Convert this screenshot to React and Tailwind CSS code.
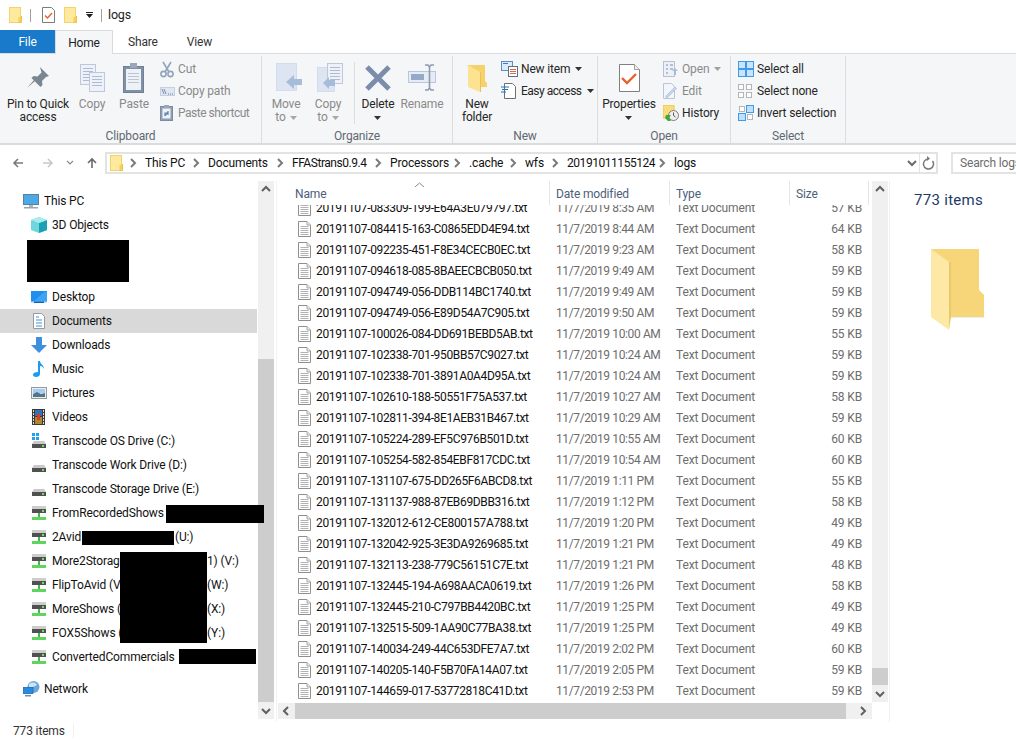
import React from "react";

const rows = [
  ["083309-199-E64A3E079797", "8:35 AM", 57], ["084415-163-C0865EDD4E94", "8:44 AM", 64],
  ["092235-451-F8E34CECB0EC", "9:23 AM", 58], ["094618-085-8BAEECBCB050", "9:49 AM", 59],
  ["094749-056-DDB114BC1740", "9:49 AM", 59], ["094749-056-E89D54A7C905", "9:50 AM", 59],
  ["100026-084-DD691BEBD5AB", "10:00 AM", 55], ["102338-701-950BB57C9027", "10:24 AM", 59],
  ["102338-701-3891A0A4D95A", "10:24 AM", 59], ["102610-188-50551F75A537", "10:27 AM", 58],
  ["102811-394-8E1AEB31B467", "10:29 AM", 59], ["105224-289-EF5C976B501D", "10:55 AM", 60],
  ["105254-582-854EBF817CDC", "10:54 AM", 60], ["131107-675-DD265F6ABCD8", "1:11 PM", 55],
  ["131137-988-87EB69DBB316", "1:12 PM", 58], ["132012-612-CE800157A788", "1:20 PM", 49],
  ["132042-925-3E3DA9269685", "1:21 PM", 49], ["132113-238-779C56151C7E", "1:21 PM", 48],
  ["132445-194-A698AACA0619", "1:26 PM", 58], ["132445-210-C797BB4420BC", "1:25 PM", 49],
  ["132515-509-1AA90C77BA38", "1:25 PM", 49], ["140034-249-44C653DFE7A7", "2:02 PM", 60],
  ["140205-140-F5B70FA14A07", "2:05 PM", 59], ["144659-017-53772818C41D", "2:53 PM", 59],
];

const S = ({ w, h, children, className = "" }) => (
  <svg width={w} height={h} viewBox={`0 0 ${w} ${h}`} className={`block shrink-0 ${className}`}>{children}</svg>
);

const FolderTiny = () => (
  <S w={13} h={16}>
    <rect x="0.5" y="0.5" width="11" height="15" fill="#ffe99e" stroke="#f4d36a" />
    <path d="M12.5 9v6.5H9.5" fill="none" stroke="#e8b93e" strokeWidth="1" />
    <rect x="9.5" y="10" width="3" height="5.5" fill="#f7cf5a" />
  </S>
);
const PropsTiny = () => (
  <S w={13} h={16}>
    <path d="M.5.5h9l3 3v12H.5z" fill="#fff" stroke="#7c7c7c" />
    <path d="M3 8.5l2.5 2.5L10 6" fill="none" stroke="#e8602a" strokeWidth="1.4" />
  </S>
);
const FileIcon = () => (
  <S w={13} h={16}>
    <path d="M.5.5h8.5l3.5 3.5v11.5H.5z" fill="#fff" stroke="#8f8f8f" />
    <path d="M9 .5v3.5h3.5" fill="#eee" stroke="#a5a5a5" />
    {[5, 7, 9, 11, 13].map((y) => <rect key={y} x="2.5" y={y} width="8" height="1" fill="#b2b2b2" />)}
  </S>
);
const Chev = ({ dir = "up", color = "#606060" }) => {
  const p = { up: "M1 6l4-4 4 4", down: "M1 2l4 4 4-4", left: "M6 1L2 5l4 4", right: "M3 1l4 4-4 4" }[dir];
  return <S w={10} h={10}><path d={p} transform={dir === "up" || dir === "down" ? "translate(0 1)" : ""} fill="none" stroke={color} strokeWidth="2" /></S>;
};
const Caret = ({ color = "#333" }) => <S w={7} h={4}><path d="M0 0h7L3.5 4z" fill={color} /></S>;

/* ribbon icons */
const Pin = () => (
  <S w={24} h={24}>
    <path d="M14 1l9 9-3 1-4 4 .5 4-2 2-9-9 2-2 4 .5 4-4z" fill="#7b8693" />
    <path d="M8 14l-7 8 8-7z" fill="#7b8693" />
  </S>
);
const DocBlue = ({ x, y, w, h }) => (
  <g>
    <rect x={x + .5} y={y + .5} width={w} height={h} fill="#eef1f7" stroke="#bcc8dd" />
    {Array.from({ length: Math.floor((h - 5) / 3) }).map((_, i) => <rect key={i} x={x + 3} y={y + 4 + i * 3} width={w - 5} height="1" fill="#aebbd0" />)}
  </g>
);
const CopyBig = () => <S w={26} h={30}><DocBlue x={1} y={1} w={15} h={20} /><DocBlue x={10} y={9} w={15} h={19} /></S>;
const PasteBig = () => (
  <S w={22} h={30}>
    <rect x=".5" y="3.5" width="20" height="26" fill="#8090a5" stroke="#6f8196" />
    <rect x="3" y="6" width="15" height="21" fill="#eef1f5" />
    {[10, 13, 16, 19].map((y) => <rect key={y} x="5" y={y} width="11" height="1" fill="#b9c5d6" />)}
    <rect x="7" y="0" width="7" height="5" fill="#9aa7b8" />
  </S>
);
const Scissors = () => (
  <S w={14} h={17}>
    <path d="M3 1l6 10M11 1L5 11" stroke="#93a5bd" strokeWidth="1.6" fill="none" />
    <circle cx="3.5" cy="13" r="2.6" fill="none" stroke="#93a5bd" strokeWidth="1.6" />
    <circle cx="10.5" cy="13" r="2.6" fill="none" stroke="#93a5bd" strokeWidth="1.6" />
  </S>
);
const CopyPathI = () => (
  <S w={15} h={9}>
    <rect x=".5" y=".5" width="14" height="8" fill="#dfe7f3" stroke="#c4d0e2" />
    <path d="M2 2l2 5M4 2l2 5" stroke="#667892" strokeWidth=".8" />
    <path d="M8 7h1M10 7h1M12 7h1" stroke="#667892" />
  </S>
);
const PasteShort = () => (
  <S w={13} h={16}>
    <rect x=".5" y="1.5" width="12" height="14" fill="#8f9fb4" stroke="#7c8da3" />
    <rect x="2.5" y="3.5" width="8" height="10" fill="#eef1f5" />
    <path d="M5 11V8h3M8 6v4M8 7L5 11" stroke="#5e83ad" strokeWidth="1.2" fill="none" />
    <rect x="4" y="0" width="5" height="3" fill="#9aa7b8" />
  </S>
);
const Arrow = () => <path d="M0 9l8-7v4h8v6H8v4z" fill="#a7bcd9" />;
const MoveTo = () => (
  <S w={27} h={29} className="ml-[6px]">
    <rect x=".5" y=".5" width="20" height="27" fill="#dde5f2" stroke="#d2dcec" />
    <g transform="translate(10 10)"><Arrow /></g>
  </S>
);
const CopyTo = () => (
  <S w={27} h={30} className="ml-[5px]">
    <rect x=".5" y="4.5" width="17" height="24" fill="#dde5f2" stroke="#d2dcec" />
    <DocBlue x={10} y={0} w={15} h={20} />
    <g transform="translate(6 13)"><path d="M0 7l6-6v3h6v6H6v3z" fill="#a7bcd9" /></g>
  </S>
);
const DeleteI = () => (
  <S w={26} h={26}>
    <path d="M2 2l22 22M24 2L2 24" stroke="#7c8dab" strokeWidth="5" />
  </S>
);
const RenameI = () => (
  <S w={29} h={27}>
    <rect x=".5" y="7.5" width="27" height="11" fill="#e6ecf5" stroke="#b9c6db" />
    <rect x="3" y="10" width="13" height="6" fill="#96a9c6" />
    <path d="M17 1h3l1.5 2L23 1h3M21.5 3v21M17 26h3l1.5-2 1.5 2h3" stroke="#8c9ab2" strokeWidth="1.6" fill="none" />
  </S>
);
const NewFolderBig = () => (
  <S w={20} h={28}>
    <path d="M0 1l12 0h6v16l2 2v4H14v-3z" fill="#f6d26b" />
    <path d="M1 1l12 7v20L1 23z" fill="#fbe391" />
    <path d="M13 8h1v20h-1z" fill="#e9c25a" />
  </S>
);
const NewItem = () => (
  <S w={17} h={16}>
    <rect x=".5" y=".5" width="11" height="9" fill="#dcebf9" stroke="#5b8fc0" />
    <rect x="2" y="2" width="5" height="1" fill="#3f7cb8" />
    <rect x="7.5" y="5.5" width="9" height="10" fill="#fff" stroke="#5f6f84" />
    {[8, 10, 12].map((y) => <rect key={y} x="9" y={y} width="6" height="1" fill="#d66b4c" />)}
  </S>
);
const EasyAccess = () => (
  <S w={15} h={16}>
    <path d="M3.5.5h8l3 3v12h-11z" fill="#fff" stroke="#6f6f6f" />
    <path d="M0 4h8M1 6.5h6M0 9h5" stroke="#1f73c4" strokeWidth="1.2" />
  </S>
);
const PropsBig = () => (
  <S w={21} h={28}>
    <path d="M.5.5h15l5 5v22H.5z" fill="#fff" stroke="#808080" />
    <path d="M15.5.5v5h5" fill="#eee" stroke="#a0a0a0" />
    <path d="M3 14l5 5 9-9" fill="none" stroke="#e8602a" strokeWidth="2.4" />
  </S>
);
const OpenI = () => (
  <S w={16} h={16}>
    <rect x=".5" y=".5" width="11" height="15" fill="#edf1f7" stroke="#b5c2d6" />
    <path d="M3 4h2M7 4h3M3 8h2M7 8h3M3 12h2" stroke="#9fb0c8" strokeWidth="1.6" />
    <path d="M9 10l3-3 3 3h-2v4h-2v-4z" fill="#a8bcd8" />
  </S>
);
const EditI = () => (
  <S w={14} h={16}>
    <path d="M.5.5h8l3 3v12h-11z" fill="#f2f5fa" stroke="#b9c6da" />
    <path d="M3 13l9-9 1.5 1.5-9 9H3z" fill="#c7d6ea" stroke="#9fb3cf" strokeWidth=".6" />
  </S>
);
const HistoryI = () => (
  <S w={16} h={16}>
    <rect x="0" y="0" width="11" height="13" fill="#f9dd7c" stroke="#e9c44a" />
    <circle cx="10.5" cy="10.5" r="5" fill="#eee" stroke="#7c7c7c" />
    <path d="M10.5 7.5v3l2 1.5" stroke="#555" fill="none" />
    <path d="M3 10h5l-2 3 2 3H5l-3-3z" fill="#3fa838" />
  </S>
);
const Sq = ({ x, y, fill, stroke, s = 7 }) => <rect x={x + .5} y={y + .5} width={s} height={s} fill={fill} stroke={stroke} />;
const SelAll = () => (
  <S w={16} h={16}>
    <rect x=".5" y=".5" width="15" height="15" fill="#cce4fb" stroke="#3c9bec" />
    <path d="M8 0v16M0 8h16" stroke="#3c9bec" strokeWidth="2" />
  </S>
);
const SelNone = () => (
  <S w={15} h={15}>
    <Sq x={0} y={0} s={5} fill="#fff" stroke="#b5b5b5" /><Sq x={8} y={0} s={5} fill="#fff" stroke="#b5b5b5" />
    <Sq x={0} y={8} s={5} fill="#fff" stroke="#b5b5b5" /><Sq x={8} y={8} s={5} fill="#fff" stroke="#b5b5b5" />
  </S>
);
const SelInvert = () => (
  <S w={16} h={16}>
    <Sq x={1} y={1} s={5} fill="#fff" stroke="#b5b5b5" /><Sq x={8} y={0} s={7} fill="#bfdffb" stroke="#3c9bec" />
    <Sq x={0} y={8} s={7} fill="#bfdffb" stroke="#3c9bec" /><Sq x={9} y={9} s={5} fill="#fff" stroke="#b5b5b5" />
  </S>
);

/* nav icons */
const PcI = () => (
  <S w={16} h={15}>
    <rect x=".5" y=".5" width="15" height="10" fill="#4ba9ea" stroke="#5f7f96" />
    <rect x="6" y="11" width="4" height="2" fill="#a9b7c2" />
    <rect x="1" y="13" width="14" height="1.5" fill="#94a6b4" />
  </S>
);
const CubeI = () => (
  <S w={16} h={16}>
    <path d="M8 0l8 3v10l-8 3-8-3V3z" fill="#6fd6de" />
    <path d="M8 6l8-3v10l-8 3z" fill="#1a9fb4" />
    <path d="M8 0l8 3-8 3-8-3z" fill="#a8ecee" />
  </S>
);
const DesktopI = () => (
  <S w={16} h={12}>
    <rect width="16" height="12" fill="#1e8ff0" />
    <path d="M2 11L13 1h3v9z" fill="#3ca3f5" />
    <rect x="0" y="10.5" width="16" height="1.5" fill="#fff" opacity=".75" />
    <rect x="3" y="10.5" width="10" height="1.5" fill="#0b63b5" />
  </S>
);
const DocsI = () => (
  <S w={12} h={16} className="ml-[2px]">
    <path d="M.5.5h8l3 3v12H.5z" fill="#fff" stroke="#9a9a9a" />
    <path d="M3 4h3M3 7h6M3 10h6M3 13h6" stroke="#3f8fd8" strokeWidth="1" />
  </S>
);
const DlI = () => (
  <S w={16} h={16}>
    <path d="M5 0h6v8h5l-8 8-8-8h5z" fill="#3f8fdf" />
  </S>
);
const MusicI = () => (
  <S w={12} h={16} className="ml-[2px]">
    <path d="M5 0h2c0 3 4 4 4 8-1-2-2-3-4-3v8c0 2-2 3-4 3s-3-1-3-2.500S2 11 5 11z" fill="#1e9bf0" />
  </S>
);
const PicI = () => (
  <S w={16} h={12}>
    <rect x=".5" y=".5" width="15" height="11" fill="#e4eef6" stroke="#9a9a9a" />
    <rect x="2" y="2" width="12" height="4" fill="#a8cdee" />
    <path d="M2 7l4-2 4 2 4-1v4H2z" fill="#52758a" />
  </S>
);
const VidI = () => (
  <S w={13} h={16} className="ml-[1px]">
    <rect width="13" height="16" fill="#3a3a3a" />
    {[1, 4, 7, 10, 13].map((y) => <g key={y}><rect x="1" y={y} width="1" height="2" fill="#ddd" /><rect x="11" y={y} width="1" height="2" fill="#ddd" /></g>)}
    <rect x="3" y="1" width="7" height="6" fill="#3b6fb5" />
    <rect x="3" y="8" width="7" height="7" fill="#b0882a" />
    <rect x="5" y="5" width="3" height="6" fill="#d83c2c" />
  </S>
);
const DriveBody = () => (
  <g>
    <path d="M2 4h10l2 3H0z" fill="#c9c9c9" />
    <rect x="0" y="7" width="14" height="4" fill="#505050" />
    <rect x="10" y="8" width="2" height="2" fill="#66e05a" />
  </g>
);
const DriveI = ({ win }) => (
  <S w={15} h={16} className="ml-[1px]">
    <g transform="translate(0 4)"><DriveBody /></g>
    {win && <g fill="#22a0f0"><rect x="0" y="0" width="3" height="3" /><rect x="4" y="0" width="3" height="3" /><rect x="0" y="4" width="3" height="3" /><rect x="4" y="4" width="3" height="3" /></g>}
  </S>
);
const NetDriveI = () => (
  <S w={14} h={15} className="ml-[1px]">
    <rect x="0" y="0" width="14" height="3" fill="#cdcdcd" />
    <rect x="0" y="3" width="14" height="4" fill="#505050" />
    <rect x="10" y="4" width="2" height="2" fill="#66e05a" />
    <rect x="6" y="7" width="2" height="4" fill="#45b94a" />
    <rect x="0" y="11" width="14" height="3" fill="#5fd45f" />
  </S>
);
const NetI = () => (
  <S w={17} h={16}>
    <circle cx="10.500" cy="6" r="6" fill="#6aa8dc" />
    <path d="M6 3c3-2 6-2 8 1-2 1-5 3-8 2z" fill="#cfe4f5" />
    <rect x="0" y="6.500" width="10" height="6" fill="#2a8ae0" stroke="#1b6cb5" strokeWidth=".8" />
    <rect x="2" y="14" width="6" height="1.500" fill="#6f8fa8" />
  </S>
);

const Large = ({ w, icon, lines, disabled, arrow }) => (
  <div className={`${w} flex flex-col items-center pt-[3px]`}>
    <div className="h-[39px] flex items-center justify-center pb-[2px]">{icon}</div>
    <div className={`text-center leading-[13px] whitespace-nowrap ${disabled ? "text-[#8a8a8a]" : "text-[#262626]"}`}>
      {lines.map((l, i) => <div key={i} className="h-[13px] flex items-center justify-center gap-[4px]">{l}</div>)}
      {arrow && <div className="h-[13px] flex items-center justify-center"><Caret /></div>}
    </div>
  </div>
);
const Small = ({ icon, iconW, text, disabled, arrow, tight }) => (
  <div className={`h-[22px] flex items-center whitespace-nowrap ${disabled ? "text-[#8a8a8a]" : "text-[#262626]"}`}>
    <div className={`${iconW} flex items-center`}>{icon}</div>
    <span className={tight ? "tracking-[-0.5px]" : ""}>{text}</span>
    {arrow && <span className="ml-[5px]"><Caret color={disabled ? "#a0a0a0" : "#333"} /></span>}
  </div>
);
const Group = ({ w, label, children }) => (
  <div className={`${w} h-[87px] mt-[2px] border-r border-[#dcdddf] flex flex-col`}>
    <div className="h-[74px] flex">{children}</div>
    <div className="h-[13px] leading-[13px] text-center text-[#5f6873]">{label}</div>
  </div>
);
const Crumb = ({ w, text, tight }) => (
  <div className={`${w} flex items-center shrink-0 whitespace-nowrap`}>
    <span className="w-[12px] mr-[6px] flex justify-center"><Chev dir="right" color="#7a7a7a" /></span>
    <span className={`text-[#111] ${tight ? "tracking-[-0.45px]" : ""}`}>{text}</span>
  </div>
);
const NavRow = ({ icon, children, sel }) => (
  <div className={`h-6 flex items-center pl-[31px] whitespace-nowrap text-[#111] ${sel ? "bg-[#d9d9d9] mr-px" : ""}`}>
    <div className="w-[21px] flex items-center">{icon}</div>
    {children}
  </div>
);
const Black = ({ className }) => <div className={`absolute bg-black z-10 ${className}`} />;

export default function App() {
  return (
    <div className="w-[1016px] h-[740px] overflow-hidden bg-white flex flex-col text-[12px] tracking-[-0.15px] [font-family:Roboto,sans-serif] text-[#222]">
      {/* title */}
      <div className="h-[30px] flex items-center pl-[9px]">
        <FolderTiny />
        <div className="w-px h-[13px] bg-[#a0a0a0] ml-[8px] mr-[11px]" />
        <PropsTiny />
        <div className="ml-[9px]"><FolderTiny /></div>
        <div className="ml-[9px] flex flex-col items-center gap-[1px]"><div className="w-[7px] h-px bg-[#222]" /><Caret color="#222" /></div>
        <div className="w-px h-[13px] bg-[#a0a0a0] ml-[8px] mr-[6px]" />
        <span className="text-[#222] text-[12.5px]">logs</span>
      </div>
      {/* tabs */}
      <div className="h-[24px] flex border-b border-[#dadbdc]">
        <div className="w-[55px] h-[23px] bg-[#1979ca] text-white flex items-center justify-center">File</div>
        <div className="w-[58px] h-[24px] bg-[#f5f6f7] border-x border-t border-[#dadbdc] flex items-center justify-center z-10 text-[#222]">Home</div>
        <div className="ml-[15px] flex items-center text-[#333] h-[23px]">Share</div>
        <div className="ml-[29px] flex items-center text-[#333] h-[23px]">View</div>
      </div>
      {/* ribbon */}
      <div className="h-[91px] bg-[#f5f6f7] border-b-2 border-[#dadbdc] flex">
        <Group w="w-[262px]" label="Clipboard">
          <Large w="w-[76px]" icon={<Pin />} lines={["Pin to Quick", "access"]} />
          <Large w="w-[32px]" icon={<CopyBig />} lines={["Copy"]} disabled />
          <Large w="w-[52px]" icon={<PasteBig />} lines={["Paste"]} disabled />
          <div className="pt-[2px]">
            <Small icon={<Scissors />} iconW="w-[18px]" text="Cut" disabled />
            <Small icon={<CopyPathI />} iconW="w-[18px]" text="Copy path" disabled />
            <Small icon={<PasteShort />} iconW="w-[18px]" text="Paste shortcut" disabled tight />
          </div>
        </Group>
        <Group w="w-[191px]" label="Organize">
          <Large w="w-[48px]" icon={<MoveTo />} lines={["Move", <><span>to</span><Caret color="#a8a8a8" /></>]} disabled />
          <Large w="w-[36px]" icon={<CopyTo />} lines={["Copy", <><span>to</span><Caret color="#a8a8a8" /></>]} disabled />
          <div className="w-[9px] h-[62px] mt-[6px] border-r border-[#dcdddf]" />
          <Large w="w-[46px]" icon={<DeleteI />} lines={["Delete"]} arrow />
          <Large w="w-[42px]" icon={<RenameI />} lines={["Rename"]} disabled />
        </Group>
        <Group w="w-[145px]" label="New">
          <Large w="w-[48px]" icon={<NewFolderBig />} lines={["New", "folder"]} />
          <div className="pt-[2px]">
            <Small icon={<NewItem />} iconW="w-[20px]" text="New item" arrow />
            <Small icon={<EasyAccess />} iconW="w-[20px]" text="Easy access" arrow tight />
          </div>
        </Group>
        <Group w="w-[133px]" label="Open">
          <Large w="w-[62px]" icon={<PropsBig />} lines={["Properties"]} arrow />
          <div className="pt-[2px] pl-[3px]">
            <Small icon={<OpenI />} iconW="w-[19px]" text="Open" disabled arrow />
            <Small icon={<EditI />} iconW="w-[19px]" text="Edit" disabled />
            <Small icon={<HistoryI />} iconW="w-[19px]" text="History" />
          </div>
        </Group>
        <Group w="w-[115px]" label="Select">
          <div className="pt-[2px] pl-[7px]">
            <Small icon={<SelAll />} iconW="w-[19px]" text="Select all" />
            <Small icon={<SelNone />} iconW="w-[19px]" text="Select none" />
            <Small icon={<SelInvert />} iconW="w-[19px]" text="Invert selection" />
          </div>
        </Group>
      </div>
      {/* address */}
      <div className="h-[36px] flex items-center pl-[12px]">
        <svg width="12" height="12" viewBox="0 0 12 12" className="block shrink-0"><path d="M11 6H2M6 2L2 6l4 4" fill="none" stroke="#7a7a7a" strokeWidth="1.6" /></svg>
        <svg width="12" height="12" viewBox="0 0 12 12" className="block shrink-0 ml-[18px]"><path d="M1 6h9M6 2l4 4-4 4" fill="none" stroke="#c8c8c8" strokeWidth="1.6" /></svg>
        <div className="ml-[12px]"><svg width="8" height="6" viewBox="0 0 8 6" className="block"><path d="M1 1l3 3 3-3" fill="none" stroke="#8a8a8a" strokeWidth="1.2" /></svg></div>
        <svg width="12" height="12" viewBox="0 0 12 12" className="block shrink-0 ml-[12px]"><path d="M6 11V2M2 6l4-4 4 4" fill="none" stroke="#6a6a6a" strokeWidth="1.6" /></svg>
        <div className="ml-[7px] w-[833px] h-[22px] border-2 border-[#e3e3e3] flex items-center pl-[3px]">
          <FolderTiny />
          <div className="w-[4px]" />
          <Crumb w="w-[63px]" text="This PC" />
          <Crumb w="w-[84px]" text="Documents" />
          <Crumb w="w-[98px]" text="FFAStrans0.9.4" tight />
          <Crumb w="w-[79px]" text="Processors" />
          <Crumb w="w-[56px]" text=".cache" />
          <Crumb w="w-[42px]" text="wfs" />
          <Crumb w="w-[107px]" text="20191011155124" tight />
          <Crumb w="w-[230px]" text="logs" />
          <div className="ml-auto flex items-center h-full">
            <Chev dir="down" color="#6a6a6a" />
            <div className="w-px h-full bg-[#e3e3e3] ml-[2px]" />
            <svg width="16" height="14" viewBox="0 0 16 14" className="block"><path d="M11.500 4a5 5 0 1 1-4-2" fill="none" stroke="#7a7a7a" strokeWidth="1.5" transform="translate(1 1)" /><path d="M7 0v5l3-2.500z" fill="#7a7a7a" /></svg>
          </div>
        </div>
        <div className="ml-[13px] flex-1 h-[22px] border-2 border-r-0 border-[#e3e3e3] flex items-center pl-[7px] text-[#6d6d6d] whitespace-nowrap overflow-hidden">Search logs</div>
      </div>
      {/* main */}
      <div className="h-[541px] flex">
        <div className="relative w-[258px] pt-[8px]">
          <div className="h-6 flex items-center pl-[23px] text-[#111]"><div className="w-[21px]"><PcI /></div>This PC</div>
          <NavRow icon={<CubeI />}>3D Objects</NavRow>
          <div className="h-[42px] my-[3px] ml-[27px] w-[102px] bg-black" />
          <NavRow icon={<DesktopI />}>Desktop</NavRow>
          <NavRow icon={<DocsI />} sel>Documents</NavRow>
          <NavRow icon={<DlI />}>Downloads</NavRow>
          <NavRow icon={<MusicI />}>Music</NavRow>
          <NavRow icon={<PicI />}>Pictures</NavRow>
          <NavRow icon={<VidI />}>Videos</NavRow>
          <NavRow icon={<DriveI win />}>Transcode OS Drive (C:)</NavRow>
          <NavRow icon={<DriveI />}>Transcode Work Drive (D:)</NavRow>
          <NavRow icon={<DriveI />}>Transcode Storage Drive (E:)</NavRow>
          <NavRow icon={<NetDriveI />}>FromRecordedShows</NavRow>
          <NavRow icon={<NetDriveI />}><span className="w-[123px]">2Avid</span><span>(U:)</span></NavRow>
          <NavRow icon={<NetDriveI />}><span className="w-[155px] overflow-hidden">More2Storag</span><span>1) (V:)</span></NavRow>
          <NavRow icon={<NetDriveI />}><span className="w-[155px]">FlipToAvid (V</span><span>(W:)</span></NavRow>
          <NavRow icon={<NetDriveI />}><span className="w-[155px]">MoreShows (</span><span>(X:)</span></NavRow>
          <NavRow icon={<NetDriveI />}><span className="w-[155px]">FOX5Shows (</span><span>(Y:)</span></NavRow>
          <NavRow icon={<NetDriveI />}>ConvertedCommercials</NavRow>
          <div className="h-6 mt-[8px] flex items-center pl-[23px] text-[#111]"><div className="w-[21px]"><NetI /></div>Network</div>
          <Black className="left-[166px] top-[324px] w-[98px] h-[18px]" />
          <Black className="left-[82px] top-[350px] w-[92px] h-[14px]" />
          <Black className="left-[120px] top-[371px] w-[87px] h-[91px]" />
          <Black className="left-[179px] top-[468px] w-[77px] h-[15px]" />
        </div>
        {/* nav scrollbar */}
        <div className="w-[16px] h-[538px] bg-[#f0f0f0] flex flex-col">
          <div className="h-[16px] flex items-center justify-center"><Chev dir="up" /></div>
          <div className="h-[162px]" />
          <div className="flex-1 bg-[#cdcdcd]" />
          <div className="h-[17px] flex items-center justify-center"><Chev dir="down" /></div>
        </div>
        <div className="w-[4px] flex"><div className="ml-[2px] w-px bg-[#f2f2f2]" /></div>
        {/* files */}
        <div className="w-[594px] flex flex-col relative">
          <div className="h-[24px] flex text-[#4c607a] shrink-0">
            <div className="w-[271px] pl-[17px] pt-[4px]">Name</div>
            <div className="w-[120px] pl-[6px] pt-[4px] border-l border-[#e5e5e5]">Date modified</div>
            <div className="w-[120px] pl-[6px] pt-[4px] border-l border-[#e5e5e5]">Type</div>
            <div className="w-[80px] pl-[6px] pt-[4px] border-x border-[#e5e5e5]">Size</div>
          </div>
          <div className="absolute left-[136px] top-[1px]"><svg width="11" height="6" viewBox="0 0 11 6" className="block"><path d="M1 5l4.500-4L10 5" fill="none" stroke="#8a8a8a" /></svg></div>
          <div className="h-[498px] overflow-hidden shrink-0">
            <div className="-mt-[8px]">
              {rows.map(([n, d, s]) => (
                <div key={n} className="h-[21px] flex items-center whitespace-nowrap">
                  <div className="w-[278px] pl-[20px] flex items-center shrink-0 text-[#111] tracking-[-0.35px]">
                    <div className="w-[18px]"><FileIcon /></div>20191107-{n}.txt
                  </div>
                  <div className="w-[120px] text-[#6d6d6d] shrink-0 tracking-[-0.38px]">11/7/2019 {d}</div>
                  <div className="w-[120px] text-[#6d6d6d] shrink-0">Text Document</div>
                  <div className="w-[66px] text-right text-[#6d6d6d] shrink-0">{s} KB</div>
                </div>
              ))}
            </div>
          </div>
          <div className="h-[16px] bg-[#f0f0f0] flex shrink-0">
            <div className="w-[17px] flex items-center justify-center"><Chev dir="left" /></div>
            <div className="w-[551px] bg-[#cdcdcd]" />
            <div className="flex-1 flex items-center justify-end pr-[4px]"><Chev dir="right" /></div>
          </div>
        </div>
        {/* list scrollbar */}
        <div className="w-[16px] h-[521px] bg-[#f0f0f0] flex flex-col">
          <div className="h-[16px] flex items-center justify-center"><Chev dir="up" /></div>
          <div className="h-[471px]" />
          <div className="h-[17px] bg-[#cdcdcd]" />
          <div className="h-[17px] flex items-center justify-center"><Chev dir="down" /></div>
        </div>
        {/* preview */}
        <div className="flex-1 ml-[1px] border-l border-[#f0f0f0] flex flex-col">
          <div className="pl-[24px] pt-[9px] text-[15px] tracking-[0.3px] leading-[20px] text-[#1c3a66]">773 items</div>
          <div className="ml-[40px] mt-[39px]">
            <S w={56} h={82}>
              <path d="M1 0h48v41l5 5v23H18V62z" fill="#f6d678" />
              <path d="M1 0l18 13v68L1 68z" fill="#fde9a5" />
              <path d="M19 13h2v55l-2 13z" fill="#e8c868" />
              <path d="M21 68h33l2 1H21z" fill="#eee" />
            </S>
          </div>
        </div>
      </div>
      {/* status */}
      <div className="h-[18px] flex items-center pl-[13px] text-[#333]">
        <span className="w-[60px]">773 items</span>
        <div className="w-px h-[14px] bg-[#f0f0f0]" />
      </div>
    </div>
  );
}
